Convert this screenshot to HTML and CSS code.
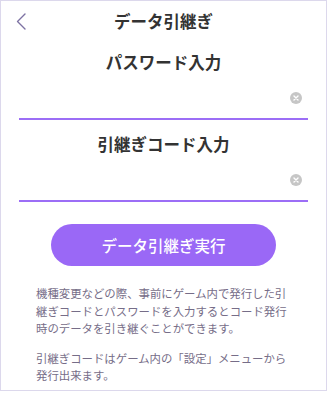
FILE: index.html
```html
<!DOCTYPE html>
<html lang="ja">
<head>
<meta charset="utf-8">
<link rel="stylesheet" href="styles.css">
</head>
<body>
<div class="screen">
  <header class="header">
    <button class="back" aria-label="戻る">
      <svg width="10" height="17" viewBox="0 0 10 17"><polyline points="9,1 1.5,8.5 9,16" fill="none" stroke="#7d72a3" stroke-width="1.4" stroke-linecap="round" stroke-linejoin="round"/></svg>
    </button>
    <h1 class="title">データ引継ぎ</h1>
    <span></span>
  </header>

  <h2 class="label first">パスワード入力</h2>
  <div class="field">
    <span class="value"></span>
    <svg class="clear" width="12" height="12" viewBox="0 0 12 12"><circle cx="6" cy="6" r="6" fill="#c6c6c6"/><path d="M4 4 L8 8 M8 4 L4 8" stroke="#fff" stroke-width="1.4" stroke-linecap="round"/></svg>
  </div>

  <h2 class="label">引継ぎコード入力</h2>
  <div class="field">
    <span class="value"></span>
    <svg class="clear" width="12" height="12" viewBox="0 0 12 12"><circle cx="6" cy="6" r="6" fill="#c6c6c6"/><path d="M4 4 L8 8 M8 4 L4 8" stroke="#fff" stroke-width="1.4" stroke-linecap="round"/></svg>
  </div>

  <div class="actions">
    <button class="submit">データ引継ぎ実行</button>
  </div>

  <div class="notes">
    <p>機種変更などの際、事前にゲーム内で発行した引<br>継ぎコードとパスワードを入力するとコード発行<br>時のデータを引き継ぐことができます。</p>
    <p>引継ぎコードはゲーム内の「設定」メニューから<br>発行出来ます。</p>
  </div>
</div>
</body>
</html>
```

FILE: styles.css
```css
* { box-sizing: border-box; }
html, body { margin: 0; padding: 0; background: #ffffff; }
body {
  font-family: "Noto Sans CJK JP", "Noto Sans", sans-serif;
  color: #333333;
}
.screen {
  width: 327px;
  height: 391px;
  border: 1px solid #dcd8ec;
  background: #ffffff;
  overflow: hidden;
}
.header {
  height: 40px;
  display: grid;
  grid-template-columns: 40px 1fr 40px;
  align-items: center;
}
.back {
  border: 0;
  background: none;
  padding: 0 0 0 15px;
  height: 40px;
  display: flex;
  align-items: center;
  cursor: pointer;
}
.title {
  margin: 0;
  text-align: center;
  font-size: 16.5px;
  font-weight: 700;
  line-height: 24px;
  color: #333;
}
.label {
  margin: 12px 0 0;
  text-align: center;
  font-size: 16.5px;
  font-weight: 700;
  line-height: 24px;
  color: #333;
}
.label.first { margin-top: 9px; }
.field {
  margin: 0 18px;
  height: 46px;
  border-bottom: 2px solid #9c6ef6;
  display: flex;
  align-items: center;
  justify-content: space-between;
  padding: 4px 6px 0 0;
}
.clear { display: block; }
.actions {
  display: flex;
  justify-content: center;
  margin-top: 22px;
}
.submit {
  width: 225px;
  height: 42px;
  border: 0;
  border-radius: 21px;
  background: #9a68f6;
  color: #ffffff;
  font-family: "Noto Sans CJK JP", sans-serif;
  font-size: 15.5px;
  font-weight: 500;
  letter-spacing: 0;
}
.notes {
  margin-top: 19px;
  padding-left: 35px;
  color: #766d88;
  font-size: 11.4px;
  line-height: 17.5px;
  white-space: nowrap;
}
.notes p { margin: 0; }
.notes p + p { margin-top: 12px; }
```
